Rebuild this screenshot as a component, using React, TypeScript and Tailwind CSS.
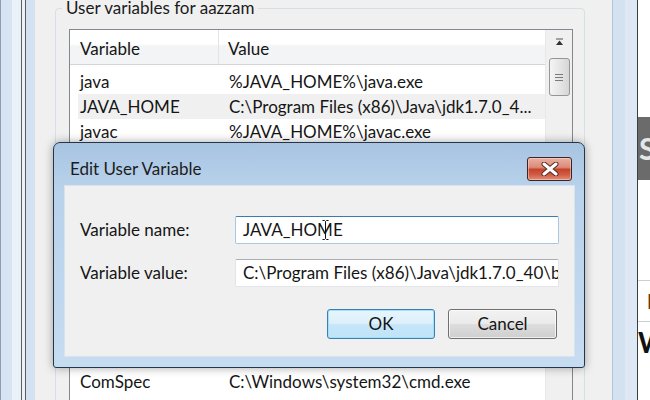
import React from "react";

const topRows: [string, string][] = [
  ["java", "%JAVA_HOME%\\java.exe"],
  ["JAVA_HOME", "C:\\Program Files (x86)\\Java\\jdk1.7.0_4..."],
  ["javac", "%JAVA_HOME%\\javac.exe"],
];

const bottomRows: [string, string][] = [["ComSpec", "C:\\Windows\\system32\\cmd.exe"]];

function CloseButton() {
  return (
    <div className="w-[45px] h-[24px] rounded-[3px] border border-[#3b2424] flex items-center justify-center bg-[linear-gradient(#eab0a2_0%,#dc8b79_42%,#c5442d_52%,#d15a43_75%,#e38f78_100%)] shadow-[inset_0_0_0_1px_rgba(255,220,210,0.5)]">
      <svg width="18" height="14" viewBox="0 0 18 14">
        <path d="M3 2 L15 12 M15 2 L3 12" stroke="#5a2a22" strokeWidth="5" strokeLinecap="round" />
        <path d="M3 2 L15 12 M15 2 L3 12" stroke="#ffffff" strokeWidth="3" strokeLinecap="round" />
      </svg>
    </div>
  );
}

function ScrollBar() {
  return (
    <div className="w-[27px] bg-[#f0f0f0] border-l border-[#e8e8e8] flex flex-col items-center">
      <div className="h-[28px] w-full flex items-center justify-center pb-[4px]">
        <svg width="9" height="8" viewBox="0 0 9 8">
          <path d="M1 1 H8" stroke="#555" strokeWidth="1" />
          <path d="M4.5 2.5 L8 7 H1 Z" fill="#333" />
        </svg>
      </div>
      <div className="w-[21px] h-[38px] rounded-[3px] border border-[#969696] bg-[linear-gradient(90deg,#f4f4f4,#e6e6e6_50%,#d6d6d6)] flex flex-col items-center justify-center gap-[2px]">
        <div className="w-[8px] h-px bg-[#7a7a7a]" />
        <div className="w-[8px] h-px bg-[#7a7a7a]" />
        <div className="w-[8px] h-px bg-[#7a7a7a]" />
      </div>
    </div>
  );
}

function Row({ name, value, selected }: { name: string; value: string; selected?: boolean }) {
  return (
    <div className={`h-[25px] flex items-center pl-[2px] whitespace-nowrap overflow-hidden ${selected ? "bg-[#f0f0f0]" : ""}`}>
      <span className="w-[149px] shrink-0">{name}</span>
      <span>{value}</span>
    </div>
  );
}

function ListView() {
  return (
    <div className="w-[504px] h-[400px] border border-[#828790] bg-white flex">
      <div className="w-[475px] flex flex-col">
        <div className="h-[35px] flex border-b border-[#d5d5d5] bg-[linear-gradient(#ffffff_0%,#ffffff_40%,#f3f4f6_48%,#f3f4f6_100%)]">
          <div className="w-[149px] pl-[10px] pt-[3px] flex items-center border-r border-[#e2e3e5]">Variable</div>
          <div className="pl-[9px] pt-[3px] flex items-center">Value</div>
        </div>
        <div className="pt-[4px] pl-[8px] flex flex-col">
          {topRows.map(([name, value], i) => (
            <Row key={name} name={name} value={value} selected={i === 1} />
          ))}
          {/* rows hidden behind the edit dialog */}
          <div className="h-[225px]" />
          {bottomRows.map(([name, value]) => (
            <Row key={name} name={name} value={value} />
          ))}
        </div>
      </div>
      <ScrollBar />
    </div>
  );
}

function EditDialog() {
  return (
    <div className="absolute left-[53px] top-[142px] w-[532px] h-[226px] rounded-t-[7px] rounded-b-[3px] border border-[#26364a] bg-[linear-gradient(#a7c4e2_0%,#b9d2eb_20%,#bed6ee_60%,#c6dcf1_100%)] shadow-[0_0_10px_rgba(0,0,0,0.35)] flex flex-col">
      <div className="h-[42px] flex items-start pt-[14px] pl-[16px] pr-[12px]">
        <span className="flex-1 mt-[2px] leading-[20px] text-[17px] text-[#1c1c1c]">Edit User Variable</span>
        <CloseButton />
      </div>
      <div className="ml-[10px] mr-[9px] h-[172px] bg-[#f0f0f0] border border-[#d9e3ee] pt-[30px] pl-[15px] pr-[15px]">
        <div className="flex items-center h-[28px]">
          <span className="w-[155px]">Variable name:</span>
          <div className="relative w-[324px] h-[28px] bg-white rounded-[2px] border border-[#a9c7e2] border-t-[#3d7bad] flex items-center pl-[7px]">
            JAVA_HOME
            <svg className="absolute left-[86px] top-[3px]" width="7" height="20" viewBox="0 0 7 20">
              <path d="M0.5 0.5 H2.5 L3.5 1.5 L4.5 0.5 H6.5 M3.5 1.5 V18.5 M0.5 19.5 H2.5 L3.5 18.5 L4.5 19.5 H6.5" stroke="#111" strokeWidth="1" fill="none" />
            </svg>
          </div>
        </div>
        <div className="mt-[15px] flex items-center h-[28px]">
          <span className="w-[155px]">Variable value:</span>
          <div className="w-[324px] h-[28px] bg-white rounded-[2px] border border-[#e2e5ea] border-t-[#abadb3] flex items-center pl-[7px] overflow-hidden whitespace-nowrap">
            C:\Program Files (x86)\Java\jdk1.7.0_40\bin
          </div>
        </div>
        <div className="mt-[22px] flex justify-end gap-[13px] pr-[2px]">
          <button className="w-[108px] h-[30px] rounded-[3px] border border-[#3c7fb1] bg-[linear-gradient(#e8f5fc_0%,#dcf0fb_48%,#c6e6f9_52%,#bfe3f8_100%)] shadow-[inset_0_0_0_1px_#9fe0ff]">
            OK
          </button>
          <button className="w-[109px] h-[30px] rounded-[3px] border border-[#707070] bg-[linear-gradient(#f2f2f2_0%,#ebebeb_48%,#dddddd_52%,#cfcfcf_100%)] shadow-[inset_0_0_0_1px_rgba(255,255,255,0.7)]">
            Cancel
          </button>
        </div>
      </div>
    </div>
  );
}

export default function App() {
  return (
    <div className="relative w-[650px] h-[400px] overflow-hidden flex font-['Lato','Noto_Sans',sans-serif] text-[17px] text-[#151515]">
      {/* left window frames */}
      <div className="w-px bg-[#8e9cab]" />
      <div className="w-[11px] bg-[#d6e4f3]" />
      <div className="w-[9px] bg-[#ebf1f8]" />
      <div className="w-px bg-[#5d6166]" />
      <div className="w-[3px] bg-[#eef2f7]" />
      <div className="w-px bg-[#5a5e63]" />
      <div className="w-[9px] bg-[#d3e1f0]" />

      {/* parent dialog client area */}
      <div className="w-[577px] bg-[#f0f0f0] pl-[20px]">
        <fieldset className="w-[530px] h-[420px] border border-[#d5dfe5] rounded-[4px] pl-[13px]">
          <legend className="-ml-[7px] px-[4px] leading-[16px] text-[#1a1a1a]">User variables for aazzam</legend>
          <div className="mt-[13px]">
            <ListView />
          </div>
        </fieldset>
      </div>

      {/* right window frame */}
      <div className="w-px bg-[#b4c4d5]" />
      <div className="w-[12px] bg-[#d3e1f0]" />
      <div className="w-[12px] bg-[#dde8f4]" />
      <div className="w-px bg-[#3b3f44]" />

      {/* window behind, on the right */}
      <div className="w-[12px] bg-white overflow-hidden flex flex-col">
        <div className="h-[117px]" />
        <div className="h-[63px] bg-[#6b6b6b] flex items-center pl-[1px] text-[30px] font-bold text-[#e6e6e6]">S</div>
        <div className="h-[101px] border-b border-[#cfcfcf]" />
        <div className="h-[41px] border-b border-[#cfcfcf] flex items-center pl-[9px] text-[20px] font-bold text-[#6b3a1a]">I</div>
        <div className="h-[40px] flex items-center text-[28px] font-bold text-[#111]">W</div>
      </div>

      <EditDialog />
    </div>
  );
}
